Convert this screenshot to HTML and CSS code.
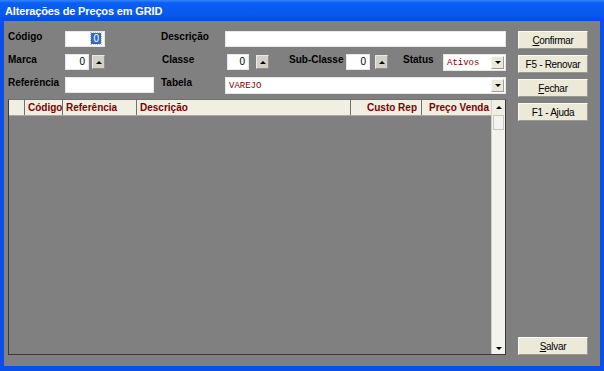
FILE: index.html
```html
<!DOCTYPE html>
<html>
<head>
<meta charset="utf-8">
<link rel="stylesheet" href="styles.css">
</head>
<body>
<div class="window">
  <div class="titlebar">Alterações de Preços em GRID</div>
  <div class="client">
    <div class="left">
      <div class="row r1">
        <span class="lbl w-cod">Código</span>
        <div class="input w40 right"><span class="sel">0</span></div>
        <span class="lbl w-desc ml56">Descrição</span>
        <div class="input w281"></div>
      </div>
      <div class="row r2">
        <span class="lbl w-cod">Marca</span>
        <div class="input w24 right">0</div>
        <div class="spin ml3"><span class="up"></span></div>
        <span class="lbl ml57 w-classe">Classe</span>
        <div class="input w22 right">0</div>
        <div class="spin ml7"><span class="up"></span></div>
        <span class="lbl ml20 w-sub">Sub-Classe</span>
        <div class="input w24 right">0</div>
        <div class="spin ml5"><span class="up"></span></div>
        <span class="lbl ml15 w-status">Status</span>
        <div class="combo w63"><span class="ctext">Ativos</span><span class="cbtn"><span class="down"></span></span></div>
      </div>
      <div class="row r3">
        <span class="lbl w-cod">Referência</span>
        <div class="input w89"></div>
        <span class="lbl ml7 w-desc">Tabela</span>
        <div class="combo w281"><span class="ctext">VAREJO</span><span class="cbtn"><span class="down"></span></span></div>
      </div>
      <div class="grid">
        <div class="gmain">
          <div class="ghead">
            <div class="gc c0"></div>
            <div class="gc c1">Código</div>
            <div class="gc c2">Referência</div>
            <div class="gc c3">Descrição</div>
            <div class="gc c4 ra">Custo Rep</div>
            <div class="gc c5 ra">Preço Venda</div>
          </div>
          <div class="gbody"></div>
        </div>
        <div class="vscroll">
          <div class="sarrow top"><span class="up"></span></div>
          <div class="thumb"></div>
          <div class="track"></div>
          <div class="sarrow bot"><span class="down"></span></div>
        </div>
      </div>
    </div>
    <div class="buttons">
      <button class="btn"><u>C</u>onfirmar</button>
      <button class="btn">F5 - Renovar</button>
      <button class="btn"><u>F</u>echar</button>
      <button class="btn">F1 - Ajuda</button>
      <div class="spacer"></div>
      <button class="btn"><u>S</u>alvar</button>
    </div>
  </div>
</div>
</body>
</html>
```

FILE: styles.css
```css
html, body {
  margin: 0;
  padding: 0;
  width: 604px;
  height: 371px;
  overflow: hidden;
  background: #808080;
}
.window {
  width: 604px;
  height: 371px;
  box-sizing: border-box;
  display: flex;
  flex-direction: column;
  background: #0a50e8;
  font-family: "Liberation Sans", Arial, sans-serif;
  font-size: 10px;
}
.titlebar {
  height: 21px;
  box-sizing: border-box;
  padding: 4px 0 0 5px;
  color: #fff;
  font-family: "Liberation Sans", Arial, sans-serif;
  font-weight: bold;
  font-size: 11px;
  line-height: 14px;
  letter-spacing: -0.15px;
  background: linear-gradient(#3584fa 0, #0a5ef4 3px, #0758ef 15px, #0449e0 21px);
}
.client {
  flex: 1;
  margin: 0 4px 5px 4px;
  background: #808080;
  display: flex;
  padding: 10px 0 0 4px;
}
.left {
  width: 498px;
  display: flex;
  flex-direction: column;
}
.row {
  display: flex;
  align-items: flex-start;
  height: 16px;
}
.r2 { margin-top: 7px; }
.r3 { margin-top: 7px; }
.lbl {
  font-weight: bold;
  color: #000;
  font-size: 10px;
  line-height: 13px;
  margin-top: -1px;
  white-space: nowrap;
}
.w-cod { width: 57px; }
.w-desc { width: 64px; }
.w-classe { width: 65px; }
.w-sub { width: 57px; }
.w-status { width: 40px; }
.ml3 { margin-left: 3px; }
.ml5 { margin-left: 5px; }
.ml7 { margin-left: 7px; }
.ml15 { margin-left: 15px; }
.ml20 { margin-left: 20px; }
.ml56 { margin-left: 56px; }
.ml57 { margin-left: 57px; }
.input {
  height: 16px;
  box-sizing: border-box;
  background: #fff;
  border: 1px solid #e8e8e8;
  color: #000;
  line-height: 14px;
  padding: 0 3px;
  font-size: 10px;
}
.right { text-align: right; }
.w22 { width: 22px; }
.w24 { width: 24px; }
.w40 { width: 40px; }
.w63 { width: 63px; }
.w89 { width: 89px; }
.w281 { width: 281px; }
.sel {
  background: #316ac5;
  color: #fff;
  padding: 0 2px;
  outline: 1px dotted #c0c0c0;
}
.spin {
  width: 13px;
  height: 14px;
  margin-top: 1px;
  background: #d4d0c8;
  border: 1px solid #e8e8e8;
  border-right-color: #909090;
  border-bottom-color: #909090;
  box-sizing: border-box;
  display: flex;
  align-items: center;
  justify-content: center;
}
.up {
  width: 0;
  height: 0;
  border-left: 3px solid transparent;
  border-right: 3px solid transparent;
  border-bottom: 3px solid #000;
}
.down {
  width: 0;
  height: 0;
  border-left: 3px solid transparent;
  border-right: 3px solid transparent;
  border-top: 3px solid #000;
}
.combo {
  height: 17px;
  box-sizing: border-box;
  background: #fff;
  border: 1px solid #e8e8e8;
  display: flex;
  align-items: center;
}
.ctext {
  flex: 1;
  color: #800000;
  font-family: "Liberation Mono", "Courier New", monospace;
  font-size: 9px;
  padding-left: 3px;
  line-height: 14px;
}
.cbtn {
  width: 13px;
  height: 13px;
  margin-right: 1px;
  background: #ece9d8;
  border: 1px solid #f8f8f8;
  border-right-color: #a0a0a0;
  border-bottom-color: #a0a0a0;
  box-sizing: border-box;
  display: flex;
  align-items: center;
  justify-content: center;
}
.grid {
  margin: 6px 0 0 0;
  width: 498px;
  height: 256px;
  box-sizing: border-box;
  border: 1px solid #3a3a3a;
  border-top-color: #707070;
  display: flex;
}
.gmain {
  flex: 1;
  display: flex;
  flex-direction: column;
}
.ghead {
  display: flex;
  height: 15px;
  background: #f1efe2;
  border-bottom: 1px solid #a8a8a0;
}
.gc {
  box-sizing: border-box;
  border-right: 1px solid #707070;
  color: #800000;
  font-weight: bold;
  font-size: 10px;
  line-height: 15px;
  padding: 0 3px 0 3px;
  white-space: nowrap;
  overflow: hidden;
}
.ra { text-align: right; }
.c0 { width: 16px; }
.c1 { width: 38px; }
.c2 { width: 74px; }
.c3 { width: 214px; }
.c4 { width: 71px; padding-right: 4px; }
.c5 { width: 69px; border-right: none; padding-right: 2px; }
.gbody {
  flex: 1;
  background: #808080;
}
.vscroll {
  width: 14px;
  box-sizing: border-box;
  display: flex;
  flex-direction: column;
  background: #f4f3ee;
  border-left: 1px solid #d0d0c8;
}
.sarrow {
  height: 15px;
  display: flex;
  align-items: center;
  justify-content: center;
  background: #f1efe2;
}
.thumb {
  height: 13px;
  margin: 0 1px;
  border: 1px solid #c8c8c0;
  background: #f4f3ee;
}
.track { flex: 1; }
.sarrow.bot {
  height: 12px;
  background: #f4f3ee;
}
.buttons {
  margin-left: 12px;
  width: 70px;
  display: flex;
  flex-direction: column;
  gap: 6px;
  padding-bottom: 11px;
}
.btn {
  width: 70px;
  height: 18px;
  flex: none;
  box-sizing: border-box;
  margin: 0;
  padding: 0;
  background: #ece9d8;
  border: 1px solid #fbfbf8;
  border-right-color: #9c9a90;
  border-bottom-color: #9c9a90;
  font-family: "Liberation Sans", Arial, sans-serif;
  font-size: 10px;
  letter-spacing: -0.3px;
  color: #000;
  line-height: 15px;
}
.spacer { flex: 1; }
```
